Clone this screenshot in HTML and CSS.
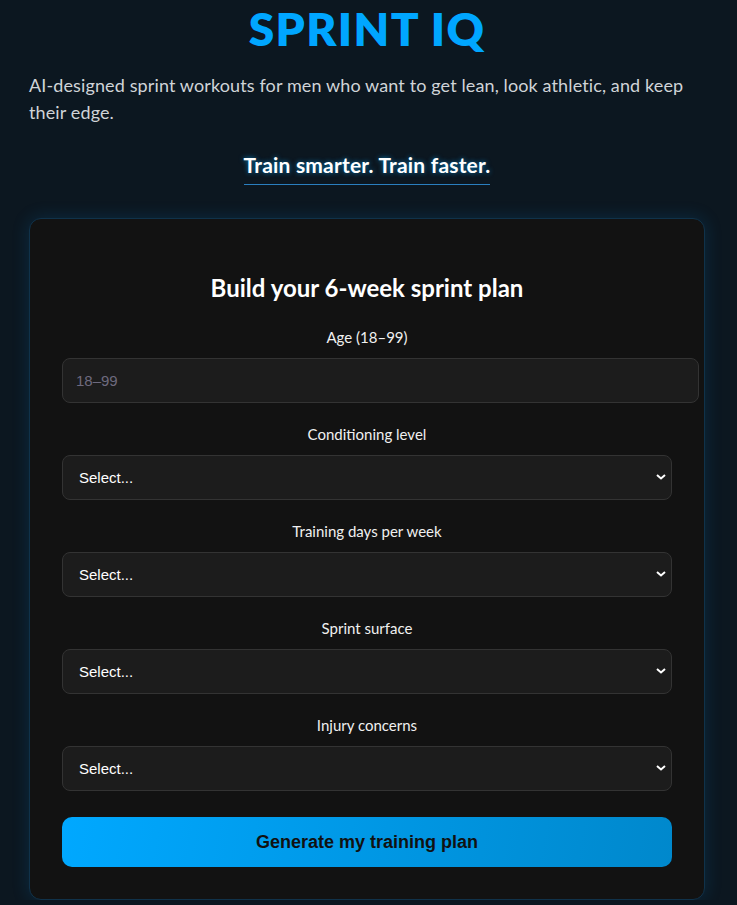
FILE: index.html
```html
<!DOCTYPE html>
<html lang="en">
<head>
<meta charset="utf-8">
<title>Sprint IQ</title>
<link rel="stylesheet" href="styles.css">
</head>
<body>
<main class="page">
  <header class="hero">
    <h1 class="brand">SPRINT IQ</h1>
    <p class="lead">AI-designed sprint workouts for men who want to get lean, look athletic, and keep their edge.</p>
    <p class="tagline"><span class="tagline-text">Train smarter. Train faster.</span></p>
  </header>
  <section class="card">
    <h2 class="card-title">Build your 6-week sprint plan</h2>
    <form class="plan-form">
      <div class="field">
        <label class="field-label" for="age">Age (18–99)</label>
        <input class="text-input" id="age" type="number" placeholder="18–99">
      </div>
      <div class="field">
        <label class="field-label" for="cond">Conditioning level</label>
        <div class="select-wrap">
          <select class="select" id="cond"><option>Select...</option></select>
          <svg class="chevron" width="10" height="6" viewBox="0 0 10 6"><path d="M1 1l4 3.5L9 1" fill="none" stroke="#fff" stroke-width="2"/></svg>
        </div>
      </div>
      <div class="field">
        <label class="field-label" for="days">Training days per week</label>
        <div class="select-wrap">
          <select class="select" id="days"><option>Select...</option></select>
          <svg class="chevron" width="10" height="6" viewBox="0 0 10 6"><path d="M1 1l4 3.5L9 1" fill="none" stroke="#fff" stroke-width="2"/></svg>
        </div>
      </div>
      <div class="field">
        <label class="field-label" for="surface">Sprint surface</label>
        <div class="select-wrap">
          <select class="select" id="surface"><option>Select...</option></select>
          <svg class="chevron" width="10" height="6" viewBox="0 0 10 6"><path d="M1 1l4 3.5L9 1" fill="none" stroke="#fff" stroke-width="2"/></svg>
        </div>
      </div>
      <div class="field">
        <label class="field-label" for="injury">Injury concerns</label>
        <div class="select-wrap">
          <select class="select" id="injury"><option>Select...</option></select>
          <svg class="chevron" width="10" height="6" viewBox="0 0 10 6"><path d="M1 1l4 3.5L9 1" fill="none" stroke="#fff" stroke-width="2"/></svg>
        </div>
      </div>
      <button class="submit" type="button">Generate my training plan</button>
    </form>
  </section>
</main>
</body>
</html>
```
FILE: styles.css
```css
* { box-sizing: border-box; }
html, body {
  margin: 0;
  background: #0c1720;
}
body {
  font-family: "Lato", "Open Sans", sans-serif;
  color: #e6e6e6;
}
.page {
  width: 676px;
  margin: 0 32px 0 29px;
}
.hero {
  display: flex;
  flex-direction: column;
}
.brand {
  margin: 4px 0 0;
  text-align: center;
  font-size: 46px;
  line-height: 50px;
  font-weight: 800;
  letter-spacing: 1.4px;
  color: #00a6ff;
}
.lead {
  margin: 18px 0 0;
  font-size: 18px;
  line-height: 27px;
  letter-spacing: 0.12px;
  color: #d0d4d8;
}
.tagline {
  margin: 26px 0 0;
  text-align: center;
}
.tagline-text {
  display: inline-block;
  font-size: 21px;
  font-weight: 700;
  line-height: 26px;
  letter-spacing: 0.2px;
  color: #ffffff;
  padding-bottom: 6px;
  border-bottom: 1px solid #2a7fbf;
  text-shadow: 0 0 5px rgba(0, 166, 255, 0.7);
}
.card {
  margin-top: 33px;
  background: #121212;
  border: 1px solid #10324a;
  border-radius: 12px;
  box-shadow: 0 0 18px rgba(0, 140, 220, 0.18);
  padding: 53px 32px 32px;
}
.card-title {
  margin: 0 0 23px;
  text-align: center;
  font-size: 24px;
  line-height: 32px;
  font-weight: 700;
  color: #ffffff;
}
.plan-form {
  display: flex;
  flex-direction: column;
}
.field {
  display: flex;
  flex-direction: column;
  margin-bottom: 21px;
}
.field:last-of-type { margin-bottom: 26px; }
.field-label {
  text-align: center;
  font-size: 15px;
  line-height: 20px;
  color: #f0f0f0;
  margin-bottom: 11px;
}
.text-input {
  width: 637px;
  height: 45px;
  padding: 0 13px;
  background: #1c1c1c;
  border: 1px solid #333;
  border-radius: 8px;
  color: #fff;
  font-family: "Liberation Sans", sans-serif;
  font-size: 15px;
}
.text-input::placeholder { color: #6e6a7e; }
.select-wrap {
  position: relative;
}
.select {
  display: block;
  width: 100%;
  height: 45px;
  padding: 0 30px 0 16px;
  background: #1c1c1c;
  border: 1px solid #333;
  border-radius: 8px;
  color: #fff;
  font-family: "Liberation Sans", sans-serif;
  font-size: 15px;
  appearance: none;
  -webkit-appearance: none;
}
.chevron {
  position: absolute;
  right: 6px;
  top: 19px;
  pointer-events: none;
}
.submit {
  height: 50px;
  border: none;
  border-radius: 10px;
  background: linear-gradient(100deg, #00a8ff 0%, #0088cc 100%);
  color: #111;
  font-family: "Liberation Sans", sans-serif;
  font-size: 18px;
  font-weight: 700;
}
```
